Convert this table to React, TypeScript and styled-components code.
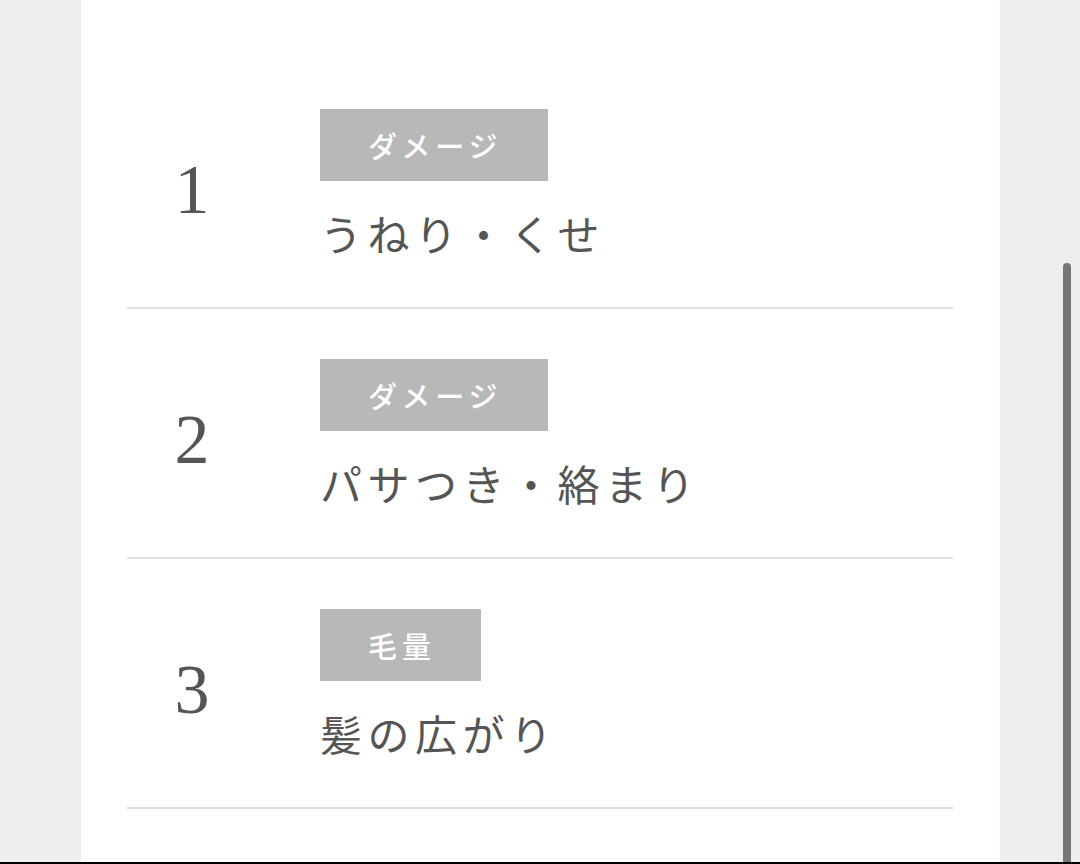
import React from "react";
import styled, { createGlobalStyle } from "styled-components";

const GlobalStyle = createGlobalStyle`
  html, body {
    margin: 0;
    padding: 0;
    background: #efedee;
    overflow: hidden;
  }
  * { box-sizing: border-box; }
`;

const Page = styled.div`
  position: relative;
  height: 864px;
  display: flex;
  flex-direction: column;
  background: #efedee;
`;

const Stage = styled.div`
  flex: 1;
  display: grid;
  grid-template-columns: 81px 919px 80px;
  min-height: 0;
`;

const Gutter = styled.div`
  background: #efedee;
`;

const Panel = styled.main`
  background: #ffffff;
  padding: 59px 47px 0 46px;
`;

const List = styled.ol`
  list-style: none;
  margin: 0;
  padding: 0;
`;

const Row = styled.li`
  display: flex;
  align-items: center;
  padding: 50px 0 43px;
  border-bottom: 2px solid #dfdfdf;
`;

const Rank = styled.div`
  width: 130px;
  flex: none;
  text-align: center;
  font-family: "Liberation Serif", "Times New Roman", serif;
  font-size: 70px;
  line-height: 1;
  color: #555555;
  padding-top: 6px;
`;

const Body = styled.div`
  margin-left: 63px;
  display: flex;
  flex-direction: column;
  align-items: flex-start;
`;

const Badge = styled.span`
  display: inline-flex;
  align-items: center;
  justify-content: center;
  height: 72px;
  padding: 0 45px 0 48px;
  background: #b8b8b8;
  color: #ffffff;
  font-family: "Noto Sans CJK JP", "Noto Sans", sans-serif;
  font-size: 29px;
  font-weight: 500;
  letter-spacing: 5px;
`;

const Title = styled.div`
  margin-top: 20px;
  font-family: "Noto Sans CJK JP", "Noto Sans", sans-serif;
  font-size: 42px;
  line-height: 63px;
  letter-spacing: 5.5px;
  color: #555555;
`;

const BottomBar = styled.div`
  height: 2px;
  background: #000000;
  flex: none;
`;

const ScrollThumb = styled.div`
  position: absolute;
  left: 1063px;
  top: 263px;
  width: 8px;
  bottom: 2px;
  border-radius: 4px 4px 0 0;
  background: #767676;
`;

const items = [
  { rank: "1", tag: "ダメージ", title: "うねり・くせ" },
  { rank: "2", tag: "ダメージ", title: "パサつき・絡まり" },
  { rank: "3", tag: "毛量", title: "髪の広がり" },
];

export default function App() {
  return (
    <>
      <GlobalStyle />
      <Page>
        <Stage>
          <Gutter />
          <Panel>
            <List>
              {items.map((it) => (
                <Row key={it.rank}>
                  <Rank>{it.rank}</Rank>
                  <Body>
                    <Badge>{it.tag}</Badge>
                    <Title>{it.title}</Title>
                  </Body>
                </Row>
              ))}
            </List>
          </Panel>
          <Gutter />
        </Stage>
        <BottomBar />
        <ScrollThumb />
      </Page>
    </>
  );
}
